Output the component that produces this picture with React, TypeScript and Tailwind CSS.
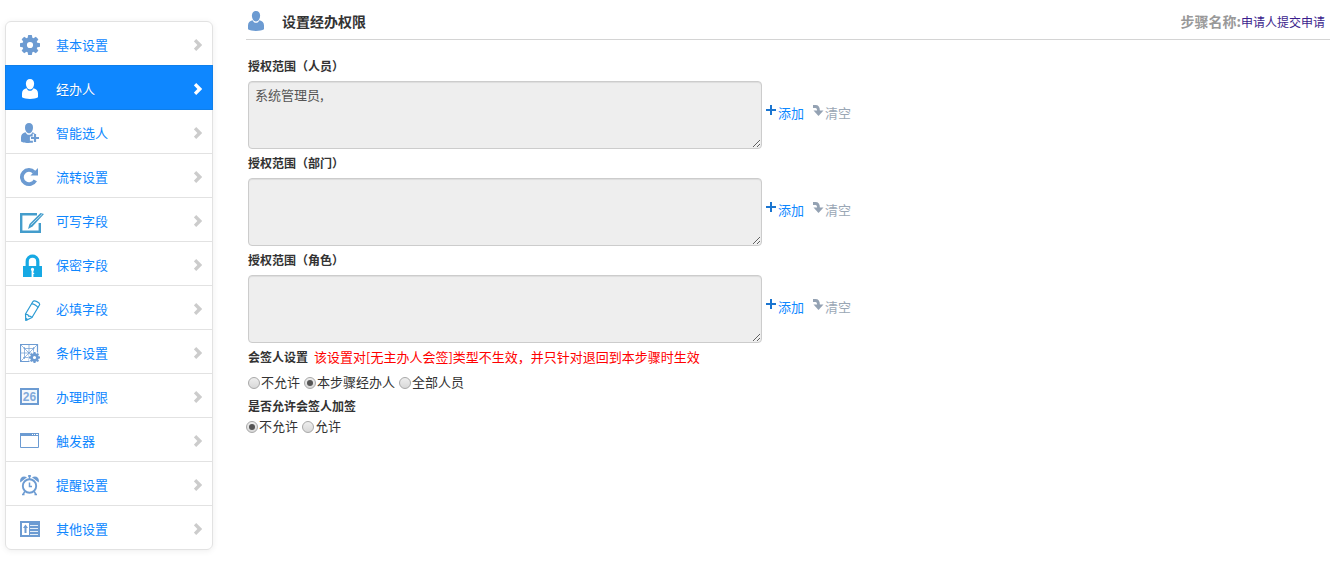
import { useState, type ReactNode } from "react";

const BLUE = "#6c9bd2";

function Svg({ children }: { children: ReactNode }) {
  return (
    <svg viewBox="0 0 24 24" className="block size-6 shrink-0" aria-hidden="true">
      {children}
    </svg>
  );
}

function PersonShape({ color }: { color: string }) {
  return (
    <g fill={color}>
      <path d="M10 2c2.6 0 4.100 1.800 4.100 4.600 0 3-1.700 6-4.100 6S5.900 9.600 5.900 6.600C5.900 3.800 7.400 2 10 2z" />
      <path d="M6.500 11.200C7.300 12.900 8.500 13.800 10 13.800s2.700-.9 3.500-2.600c2.800.8 4.500 2.400 4.500 5.300v3.800C16.200 21.400 13.400 22 10 22s-6.200-.6-8-1.700v-3.800c0-2.900 1.700-4.500 4.500-5.300z" />
    </g>
  );
}

const teeth = [0, 45, 90, 135, 180, 225, 270, 315];

const icons: Record<string, ReactNode> = {
  gear: (
    <Svg>
      <g fill={BLUE}>
        {teeth.map((a) => (
          <path key={a} d="M7.200 6.500L8.200 2h3.600l1 4.500z" transform={`rotate(${a} 10 12)`} />
        ))}
      </g>
      <circle cx="10" cy="12" r="5.300" fill="none" stroke={BLUE} strokeWidth="4.400" />
    </Svg>
  ),
  person: (
    <Svg>
      <PersonShape color="#fff" />
    </Svg>
  ),
  personAdd: (
    <Svg>
      <path d="M9 2c2.500 0 4 1.700 4 4.500 0 2.900-1.600 5.800-4 5.800S5 9.400 5 6.500C5 3.700 6.500 2 9 2z" fill={BLUE} />
      <path d="M5.500 11.200c.8 1.700 2 2.600 3.500 2.600s2.700-.9 3.500-2.600c1.200.4 2.100.9 2.800 1.600h-2.600v2.700H9.900v4.300h3v2C4.500 22.300 2.800 21.500 1 20.500v-4c0-2.900 1.700-4.500 4.500-5.300z" fill={BLUE} />
      <path d="M15 13v8M11 17h8" stroke={BLUE} strokeWidth="2.200" />
    </Svg>
  ),
  refresh: (
    <Svg>
      <path d="M14.200 7.200A7.100 7.100 0 1 0 15.300 15.300" fill="none" stroke={BLUE} strokeWidth="3.800" />
      <path d="M18 3V10.500H10.500z" fill={BLUE} />
    </Svg>
  ),
  edit: (
    <Svg>
      <path d="M17 5.200H1.200V22.800H19.800V14" fill="none" stroke="#449dcc" strokeWidth="2.400" />
      <path d="M8 20l1.500-5L20.500 4l3.500 1L12.500 17.500z" fill="#449dcc" />
      <path d="M10.800 16L22 5.300" stroke="#d9edf7" strokeWidth="0.800" />
    </Svg>
  ),
  lock: (
    <Svg>
      <path d="M7.200 13V8.500a5.300 5.300 0 0 1 10.600 0V13" fill="none" stroke="#16a9e4" strokeWidth="3.200" />
      <path d="M3 13h19v11H3z" fill="#16a9e4" />
      <path d="M11 17a1.600 1.600 0 1 1 3 0l-.6 1.200V20h.8v1h-.8v3h-1.800v-6z" fill="#fff" />
    </Svg>
  ),
  pencil: (
    <Svg>
      <g fill="none" stroke="#2b9bd3" strokeWidth="1.200" strokeLinejoin="round">
        <path d="M5.500 17L12.800 4.800c1.200-2 7.400.4 6.800 3L12 20.500 5.800 23.500z" />
        <path d="M5.500 17.500c2.500-.6 3 1 3.300 1.800 1.200-.3 2.500.3 3.200 1.200M11.500 7c2-.3 5.800 1.600 6.500 3.800" />
        <path d="M5.600 21.500l2 1.200" strokeWidth="1.600" />
      </g>
    </Svg>
  ),
  condition: (
    <Svg>
      <g fill="none" stroke={BLUE}>
        <path d="M9.500 20.500H.5v-17h17v9" strokeWidth="1.200" />
        <path d="M1 4l16 16M17 4L1 20M9 4v16M1 12h16M3.500 7.500h11M4.500 6v12M13.500 6v8M3 16.500h7" strokeWidth="0.700" />
      </g>
      <circle cx="14.500" cy="16.500" r="5.900" fill="#fff" />
      <g fill={BLUE}>
        {teeth.map((a) => (
          <path key={a} d="M13.200 13.200l.3-2.200h2l.3 2.200z" transform={`rotate(${a} 14.500 16.500)`} />
        ))}
      </g>
      <circle cx="14.500" cy="16.500" r="2.900" fill="none" stroke={BLUE} strokeWidth="2.600" />
    </Svg>
  ),
  calendar: (
    <Svg>
      <path d="M1 4h17v15H1z" fill="#f4f8fc" stroke={BLUE} strokeWidth="2" />
      <text x="9.500" y="16" textAnchor="middle" fontSize="12" fontWeight="bold" fill="#82aadb" fontFamily="Liberation Sans, sans-serif">
        26
      </text>
    </Svg>
  ),
  window: (
    <Svg>
      <path d="M.5 4.500h18v14H.5z" fill="#fff" stroke={BLUE} />
      <path d="M0 4h19v3H0z" fill={BLUE} />
      <path d="M12 5.500h1M14 5.500h1M16 5.500h2" stroke="#fff" />
    </Svg>
  ),
  alarm: (
    <Svg>
      <circle cx="9.500" cy="13" r="6.700" fill="none" stroke={BLUE} strokeWidth="1.900" />
      <path d="M9.500 9.500v4H12M9.500 2v4M8 3h3M4.800 18.500L2.800 21.800M14.200 18.500l2 3.300M2 21.500h2.500M14.500 21.500H17" fill="none" stroke={BLUE} strokeWidth="1.500" />
      <path d="M.3 9.500C-.8 5 2.500 2 7 4.200zM18.700 9.500c1.100-4.500-2.200-7.500-6.700-5.300z" fill={BLUE} />
    </Svg>
  ),
  card: (
    <Svg>
      <path d="M0 4h20v16H0z" fill={BLUE} />
      <path d="M2 6h7v12H2z" fill="#fff" />
      <path d="M5.500 7.500L8 11H6.500v5h-2v-5H3z" fill={BLUE} />
      <path d="M10 8.500H18M10 11.500H18M10 14.500H18M10 17.500H18" stroke="#e4eef8" />
    </Svg>
  ),
};

const menu = [
  { icon: "gear", label: "基本设置" },
  { icon: "person", label: "经办人", active: true },
  { icon: "personAdd", label: "智能选人" },
  { icon: "refresh", label: "流转设置" },
  { icon: "edit", label: "可写字段" },
  { icon: "lock", label: "保密字段" },
  { icon: "pencil", label: "必填字段" },
  { icon: "condition", label: "条件设置" },
  { icon: "calendar", label: "办理时限" },
  { icon: "window", label: "触发器" },
  { icon: "alarm", label: "提醒设置" },
  { icon: "card", label: "其他设置" },
];

function Sidebar() {
  return (
    <nav className="w-[208px] shrink-0 rounded-md border border-[#e2e2e2] shadow-[0_1px_6px_rgba(0,0,0,0.07)]">
      <ul>
        {menu.map((m) => (
          <li key={m.label} className="group">
            <a
              href="#"
              aria-current={m.active ? "page" : undefined}
              className={
                m.active
                  ? "-mx-px -mt-px flex h-[45px] items-center border border-[#0f7fea] bg-[#0e87ff] pt-[3px] pr-2.5 pl-3.5 text-white text-shadow-2xs"
                  : "flex h-11 items-center border-b border-[#e2e2e2] pt-[3px] pr-2.5 pl-3.5 text-[#0e87ff] group-last:h-[43px] group-last:border-b-0"
              }
            >
              {icons[m.icon]}
              <span className="ml-3 flex-1 text-[13px] leading-5">{m.label}</span>
              <svg viewBox="0 0 8 12" className="h-3 w-2" aria-hidden="true">
                <path d="M1 1.200L5.800 6 1 10.800" fill="none" stroke={m.active ? "#fff" : "#ccc"} strokeWidth="3.400" />
              </svg>
            </a>
          </li>
        ))}
      </ul>
    </nav>
  );
}

function ScopeField({ id, label, initial }: { id: string; label: string; initial: string }) {
  const [value, setValue] = useState(initial);
  return (
    <div>
      <label htmlFor={id} className="block pb-0.5 text-[12px] leading-[27px] font-bold">
        {label}
      </label>
      <div className="flex items-center">
        <textarea
          id={id}
          readOnly
          value={value}
          className="block h-[68px] w-[514px] resize rounded border border-[#ccc] bg-[#eee] px-1.5 py-[3px] text-[13px] leading-5 text-[#555] shadow-[inset_0_1px_1px_rgba(0,0,0,0.075)] outline-none"
        />
        <button type="button" className="ml-1 flex items-center pb-1 text-[13px] leading-5 text-[#0e87ff]">
          <svg viewBox="0 0 12 18" className="h-[18px] w-3" aria-hidden="true">
            <path d="M5 1v10M0 6h10" stroke="#1b75d0" strokeWidth="2" />
          </svg>
          添加
        </button>
        <button
          type="button"
          onClick={() => setValue("")}
          className="ml-2 flex items-center pb-1 text-[13px] leading-5 text-[#9aa7b5]"
        >
          <svg viewBox="0 0 13 18" className="h-[18px] w-[13px]" aria-hidden="true">
            <path d="M1 2.500h2.500C6 2.500 6.500 4 6.500 7" fill="none" stroke="#94a2b3" strokeWidth="2.800" />
            <path d="M1.500 6.500h10L6.500 12z" fill="#94a2b3" />
          </svg>
          清空
        </button>
      </div>
    </div>
  );
}

function RadioRow({ name, options, initial }: { name: string; options: string[]; initial: string }) {
  const [value, setValue] = useState(initial);
  return (
    <div className="flex items-center gap-1">
      {options.map((o) => (
        <label key={o} className="flex items-center gap-px text-[13px] leading-[18px]">
          <input
            type="radio"
            name={name}
            checked={value === o}
            onChange={() => setValue(o)}
            className="mt-0.5 grid size-3 appearance-none place-items-center rounded-full border border-[#a8a8a8] bg-linear-to-b from-[#eee] to-[#d8d8d8] before:size-1.5 before:rounded-full checked:before:bg-[#555]"
          />
          {o}
        </label>
      ))}
    </div>
  );
}

export default function App() {
  return (
    <div className="flex items-start gap-[33px] bg-white pl-[5px] font-['Noto_Sans_CJK_SC',sans-serif] text-[#333]">
      <div className="pt-[21px] pb-[11px]">
        <Sidebar />
      </div>
      <main className="mr-px min-w-0 flex-1">
        <header className="flex h-10 items-center border-b border-[#d4d4d4] pt-[3px] pr-[5px]">
          <Svg>
            <PersonShape color={BLUE} />
          </Svg>
          <h1 className="ml-3 text-[14px] leading-5 font-bold">设置经办权限</h1>
          <p className="ml-auto flex items-baseline text-[14px] leading-5 font-bold text-[#999]">
            步骤名称:
            <a href="#" className="text-[12px] font-normal text-[#3a1d8c]">
              申请人提交申请
            </a>
          </p>
        </header>
        <form className="pt-3 pl-0.5">
          <ScopeField id="scope-user" label="授权范围（人员）" initial="系统管理员," />
          <ScopeField id="scope-dept" label="授权范围（部门）" initial="" />
          <ScopeField id="scope-role" label="授权范围（角色）" initial="" />
          <fieldset>
            <legend className="flex h-[29px] items-center pb-0.5 text-[12px] font-bold">
              会签人设置
              <span className="ml-1.5 text-[13px] font-normal text-[#f00]">
                该设置对[无主办人会签]类型不生效，并只针对退回到本步骤时生效
              </span>
            </legend>
            <div className="py-px">
              <RadioRow name="cosign" options={["不允许", "本步骤经办人", "全部人员"]} initial="本步骤经办人" />
            </div>
          </fieldset>
          <fieldset className="mt-0.5 pt-[3px]">
            <legend className="h-6 text-[12px] leading-6 font-bold">是否允许会签人加签</legend>
            <div className="-mt-1 -ml-0.5">
              <RadioRow name="addsign" options={["不允许", "允许"]} initial="不允许" />
            </div>
          </fieldset>
        </form>
      </main>
    </div>
  );
}
